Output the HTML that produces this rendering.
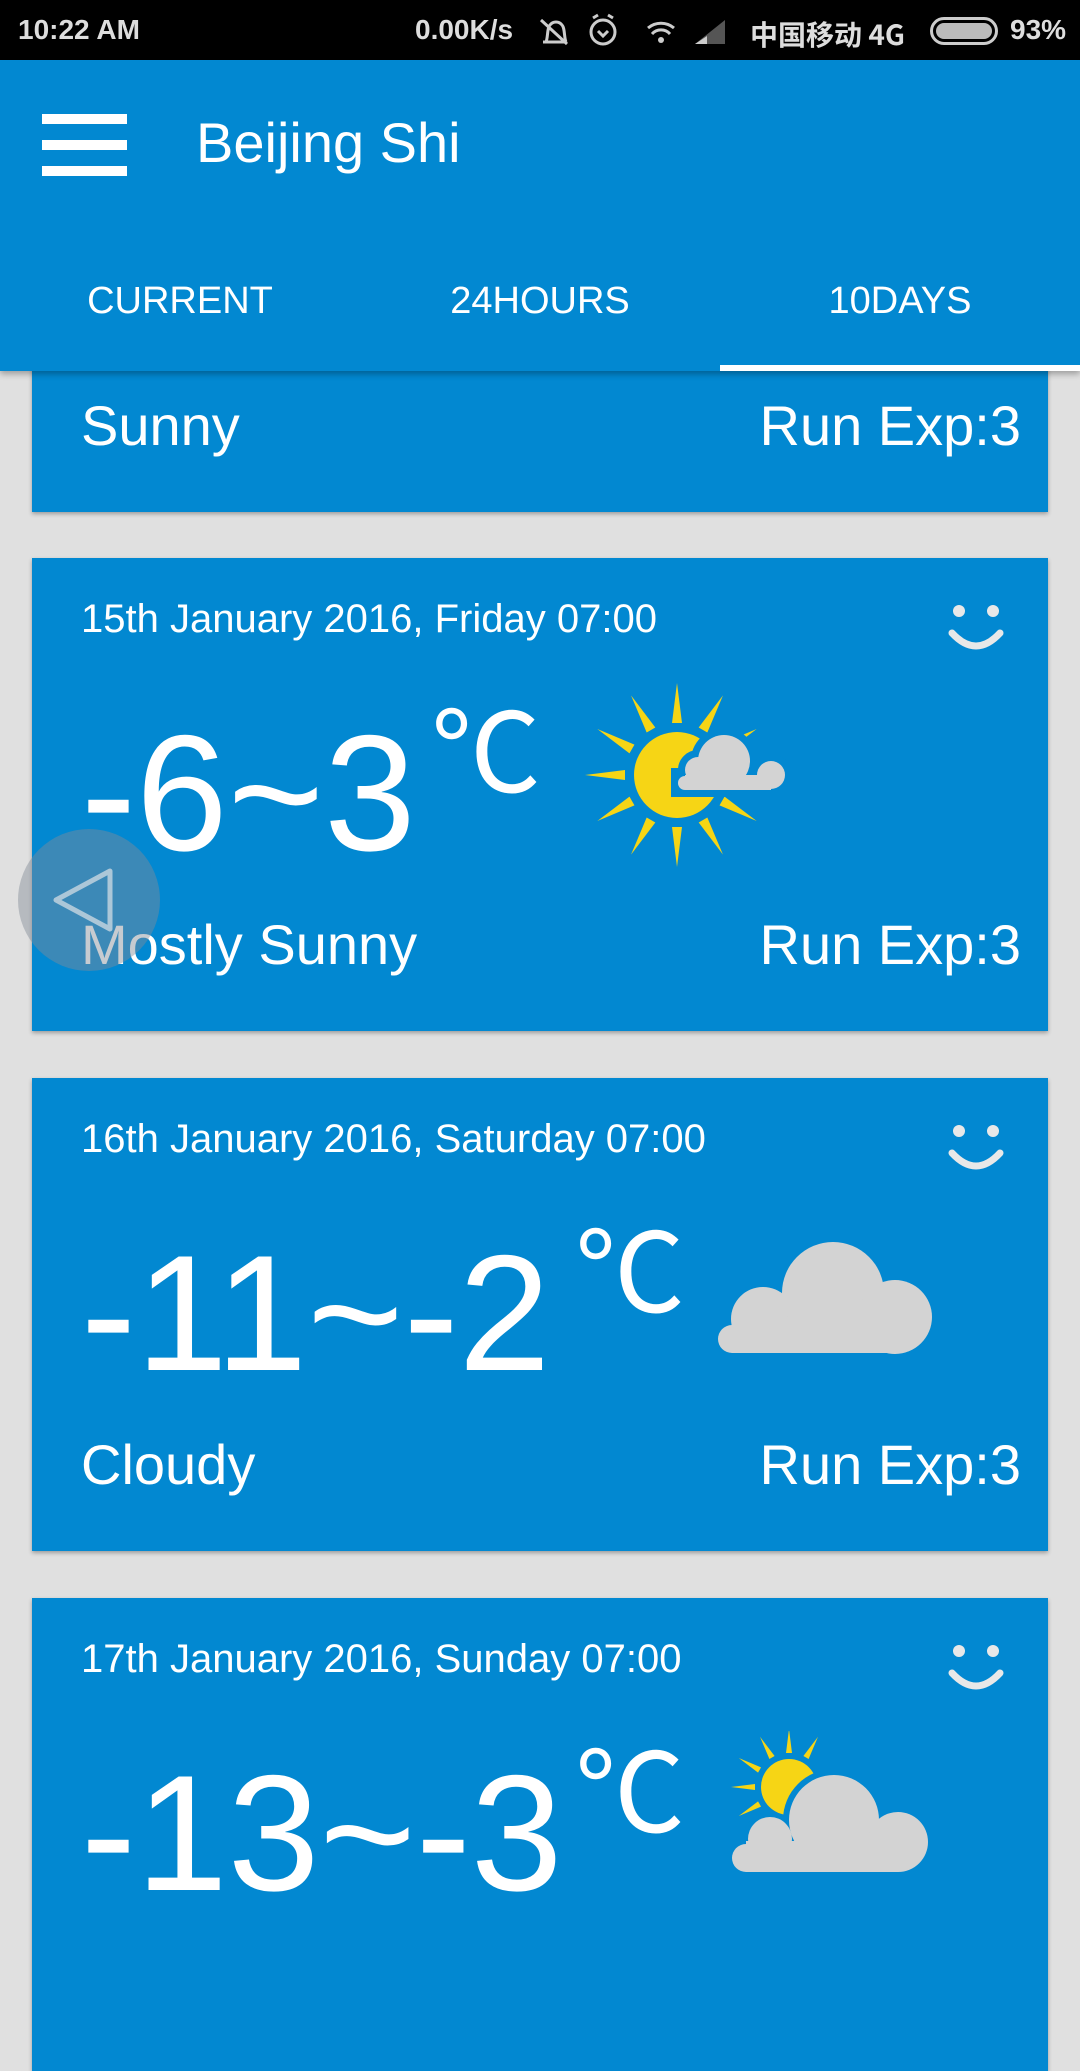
<!DOCTYPE html>
<html><head><meta charset="utf-8"><style>
*{margin:0;padding:0;box-sizing:border-box}
body{width:1080px;height:1920px;background:#e0e0e0;position:relative;overflow:hidden;font-family:"Liberation Sans","Noto Sans CJK SC",sans-serif;color:#fff}
.sb{position:absolute;left:0;top:0;width:1080px;height:60px;background:#000;color:#ddd;font-size:28px;font-weight:bold;z-index:5}
.sb span{position:absolute;top:14px}
.hd{position:absolute;left:0;top:60px;width:1080px;height:311px;background:#0288d1;z-index:4;box-shadow:0 3px 6px rgba(0,0,0,.3)}
.ham{position:absolute;left:42px;width:85px;height:10px;background:#fff}
.title{position:absolute;left:196px;top:55px;font-size:56px;line-height:1}
.tab{position:absolute;top:222px;font-size:38px;line-height:1;width:360px;text-align:center}
.ind{position:absolute;left:720px;top:305px;width:360px;height:6px;background:#fff}
.card{position:absolute;left:32px;width:1016px;height:473px;background:#0288d1;box-shadow:0 2px 4px rgba(0,0,0,.3)}
.date{position:absolute;left:49px;top:41px;font-size:40px;line-height:1;white-space:nowrap}
.temp{position:absolute;left:49px;top:153px;font-size:165px;line-height:1;white-space:nowrap}
.deg{position:absolute;top:131px;font-size:110px;line-height:1;font-family:"Noto Sans CJK SC",sans-serif}
.l{position:absolute;left:49px;top:359px;font-size:56px;line-height:1}
.r{position:absolute;right:27px;top:359px;font-size:56px;line-height:1}
.sm{position:absolute;left:915px;top:43px}
</style></head><body>
<div class="sb"><span style="left:18px">10:22 AM</span><span style="left:415px">0.00K/s</span><span style="left:750px;font-family:'Noto Sans CJK SC',sans-serif">中国移动 4G</span>
<div style="position:absolute;left:930px;top:17px;width:68px;height:28px;border:3px solid #ccc;border-radius:14px;padding:3px"><div style="width:100%;height:100%;background:#bbb;border-radius:9px"></div></div><span style="left:1010px">93%</span>
<svg style="position:absolute;left:535px;top:12px" width="210" height="38"><g fill="none" stroke="#ccc" stroke-width="3"><path d="M8 30h22M11 30c2-4 1-14 4-17 3-4 9-4 12 0 3 3 2 13 4 17M6 8l26 24"/><circle cx="68" cy="20" r="12"/><path d="M63 19l5 5 5-5M58 6l5-3M78 6l-5-3"/><path d="M113 16a20 20 0 0 1 26 0M117 22a12 12 0 0 1 18 0"/></g><circle cx="126" cy="28" r="3" fill="#ccc"/><path d="M160 32h30V8z" fill="#555"/><path d="M160 32h12V24l-12 8z" fill="#ccc"/></svg></div>
<div class="hd">
<div class="ham" style="top:54px"></div><div class="ham" style="top:80px"></div><div class="ham" style="top:106px"></div>
<div class="title">Beijing Shi</div>
<div class="tab" style="left:0">CURRENT</div><div class="tab" style="left:360px">24HOURS</div><div class="tab" style="left:720px">10DAYS</div>
<div class="ind"></div></div>

<div class="card" style="top:39px"><div class="l">Sunny</div><div class="r">Run Exp:3</div></div>

<div class="card" style="top:558px">
<div class="date">15th January 2016, Friday 07:00</div>
<svg class="sm" width="60" height="54"><circle cx="12" cy="10" r="6" fill="#e8e8e8"/><circle cx="46" cy="10" r="6" fill="#e8e8e8"/><path d="M5 32q24 26 48 0" stroke="#e8e8e8" stroke-width="7" fill="none" stroke-linecap="round"/></svg>
<div class="temp">-6~3</div><div class="deg" style="left:399px">℃</div>
<svg style="position:absolute;left:553px;top:125px" width="210" height="190"><g fill="#f6d515" transform="translate(92,92)"><g id="ray"><path d="M-5 -52L0 -92 5 -52z"/></g><use href="#ray" transform="rotate(30)"/><use href="#ray" transform="rotate(60)"/><use href="#ray" transform="rotate(90)"/><use href="#ray" transform="rotate(120)"/><use href="#ray" transform="rotate(150)"/><use href="#ray" transform="rotate(180)"/><use href="#ray" transform="rotate(210)"/><use href="#ray" transform="rotate(240)"/><use href="#ray" transform="rotate(270)"/><use href="#ray" transform="rotate(300)"/><use href="#ray" transform="rotate(330)"/><circle r="43"/></g>
<g fill="#0288d1" stroke="#0288d1" stroke-width="14"><circle cx="100" cy="100" r="7"/><circle cx="113" cy="87" r="13"/><circle cx="139" cy="78" r="26"/><circle cx="186" cy="92" r="14"/><rect x="93" y="92" width="107" height="15"/></g>
<g fill="#d3d3d3"><circle cx="100" cy="100" r="7"/><circle cx="113" cy="87" r="13"/><circle cx="139" cy="78" r="26"/><circle cx="186" cy="92" r="14"/><rect x="100" y="92" width="86" height="15"/></g></svg>
<div class="l">Mostly Sunny</div><div class="r">Run Exp:3</div></div>

<div class="card" style="top:1078px">
<div class="date">16th January 2016, Saturday 07:00</div>
<svg class="sm" width="60" height="54"><circle cx="12" cy="10" r="6" fill="#e8e8e8"/><circle cx="46" cy="10" r="6" fill="#e8e8e8"/><path d="M5 32q24 26 48 0" stroke="#e8e8e8" stroke-width="7" fill="none" stroke-linecap="round"/></svg>
<div class="temp">-11~-2</div><div class="deg" style="left:543px">℃</div>
<svg style="position:absolute;left:686px;top:163px" width="220" height="114"><g fill="#d3d3d3"><circle cx="14" cy="98" r="14"/><circle cx="45" cy="78" r="32"/><circle cx="115" cy="52" r="51"/><circle cx="177" cy="76" r="37"/><rect x="14" y="76" width="163" height="36"/></g></svg>
<div class="l">Cloudy</div><div class="r">Run Exp:3</div></div>

<div class="card" style="top:1598px">
<div class="date">17th January 2016, Sunday 07:00</div>
<svg class="sm" width="60" height="54"><circle cx="12" cy="10" r="6" fill="#e8e8e8"/><circle cx="46" cy="10" r="6" fill="#e8e8e8"/><path d="M5 32q24 26 48 0" stroke="#e8e8e8" stroke-width="7" fill="none" stroke-linecap="round"/></svg>
<div class="temp">-13~-3</div><div class="deg" style="left:543px">℃</div>
<svg style="position:absolute;left:698px;top:133px" width="200" height="145"><g fill="#f6d515" transform="translate(59,56)"><g id="r2"><path d="M-3 -34L0 -58 3 -34z"/></g><use href="#r2" transform="rotate(-60)"/><use href="#r2" transform="rotate(-30)"/><use href="#r2" transform="rotate(30)"/><use href="#r2" transform="rotate(-90)"/><use href="#r2" transform="rotate(-120)"/><circle r="28"/></g>
<g fill="#0288d1"><circle cx="104" cy="89" r="51"/><circle cx="40" cy="108" r="27"/></g>
<g fill="#d3d3d3"><circle cx="16" cy="127" r="14"/><circle cx="40" cy="108" r="22"/><circle cx="104" cy="89" r="45"/><circle cx="168" cy="111" r="30"/><rect x="16" y="110" width="152" height="31"/></g></svg>
</div>

<svg style="position:absolute;left:18px;top:829px" width="142" height="142"><circle cx="71" cy="71" r="71" fill="rgba(130,140,150,.45)"/><path d="M38 71L92 42V100z" fill="none" stroke="rgba(220,225,230,.7)" stroke-width="5" stroke-linejoin="round"/></svg>
</body></html>
